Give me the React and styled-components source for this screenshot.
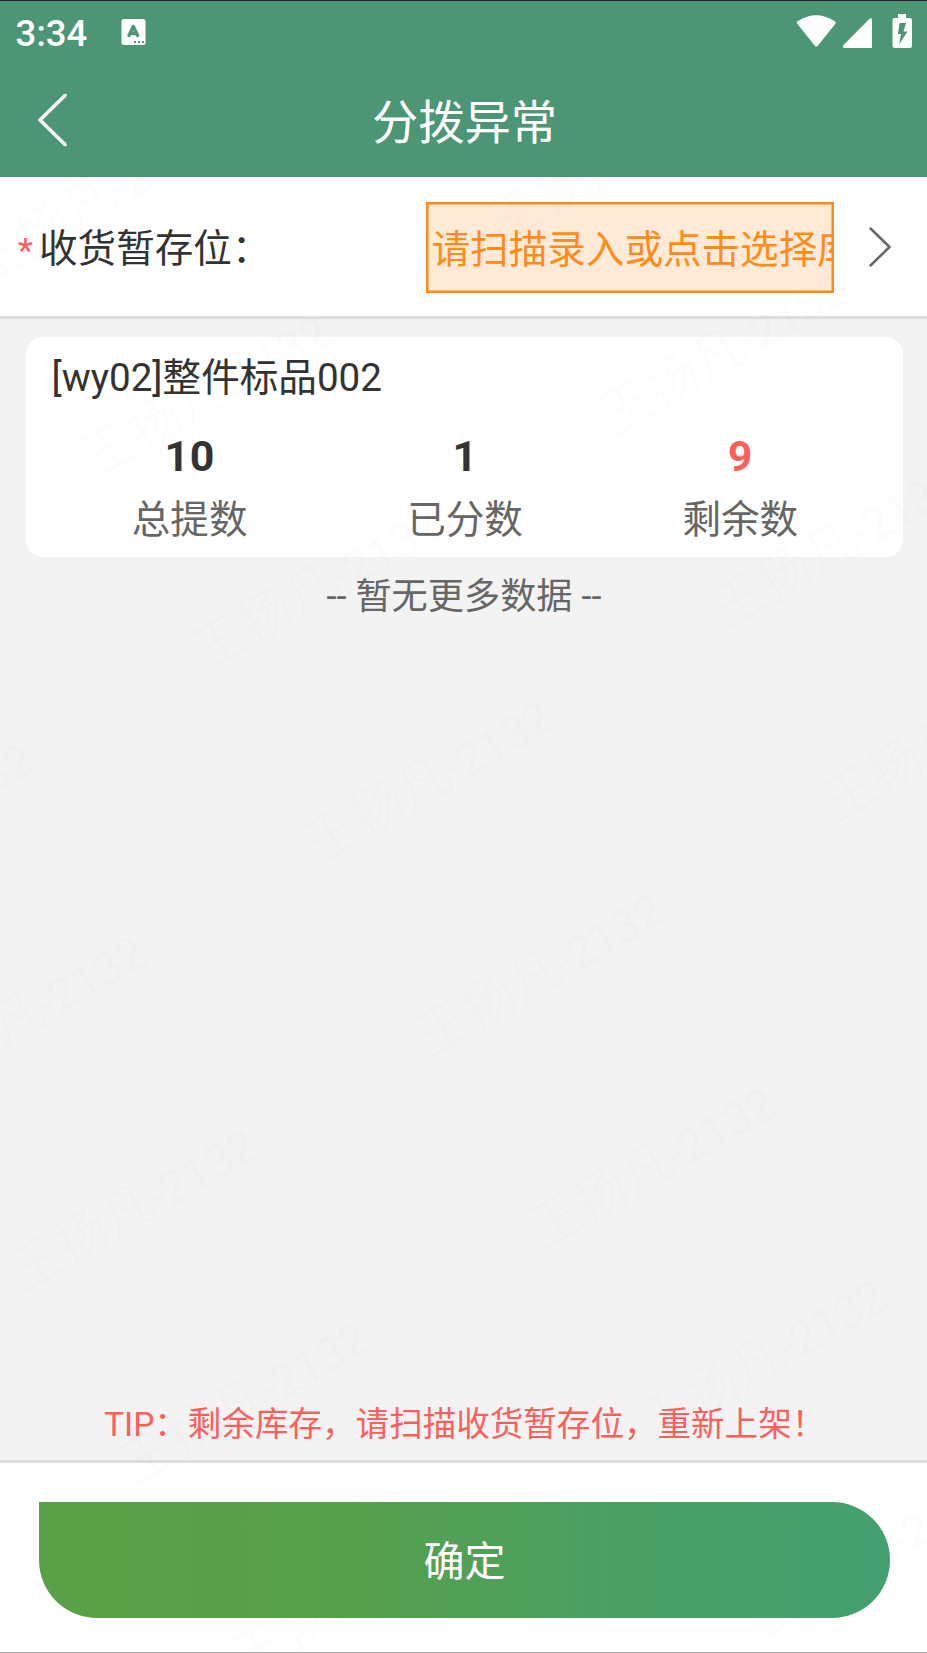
import React from 'react';
import styled, { createGlobalStyle } from 'styled-components';

const Global = createGlobalStyle`
  * { box-sizing: border-box; }
  body { margin: 0; font-family: Roboto, "Noto Sans CJK SC", sans-serif; color: #333; }
`;

const Screen = styled.div`
  position: relative;
  display: flex;
  flex-direction: column;
  width: 927px;
  height: 1653px;
  overflow: hidden;
  background: #f3f3f3;
  border-top: 1px solid #24262f;
  border-bottom: 1px solid #a5a5a5;
`;

const Header = styled.header`
  height: 175.5px;
  flex: none;
  background: #4d9675;
  color: #fff;
`;

const StatusBar = styled.div`
  display: flex;
  align-items: center;
  height: 62px;
  padding: 0 14px 0 15.5px;
`;

const Clock = styled.span`
  font-size: 36.5px;
  font-weight: 500;
  line-height: 64px;
  padding-top: 4px;
  width: 105px;
`;

const StatusIcons = styled.div`
  margin-left: auto;
  display: flex;
`;

const TitleBar = styled.div`
  display: grid;
  grid-template-columns: 100px 1fr 98px;
  align-items: center;
  height: 113.5px;
`;

const BackButton = styled.button`
  display: flex;
  padding: 0 0 3px 35px;
  border: 0;
  background: none;
`;

const Title = styled.h1`
  margin: 0;
  padding-top: 4px;
  text-align: center;
  font-size: 46.3px;
  font-weight: 400;
  line-height: 112px;
`;

const Field = styled.section`
  display: flex;
  align-items: center;
  flex: none;
  height: 142.5px;
  padding: 3px 35px 0 18px;
  background: #fff;
  border-bottom: 3px solid #dedede;
`;

const Required = styled.span`
  width: 21px;
  color: #ff5f5c;
  font-size: 33px;
  font-weight: 500;
  line-height: 40px;
  padding-top: 6px;
`;

const Label = styled.label`
  flex: 1;
  padding-top: 3px;
  font-size: 38.6px;
  line-height: 60px;
`;

const ScanInput = styled.div`
  width: 408px;
  height: 91px;
  padding-left: 3.5px;
  border: 2px solid #ff8c1a;
  box-shadow: inset 0 0 0 0.5px #ff8c1a;
  background: #ffead8;
  color: #ff8c1a;
  font-size: 38.6px;
  line-height: 92px;
  white-space: nowrap;
  overflow: hidden;
`;

const Arrow = styled.svg`
  margin: -1px 0 0 34px;
`;

const Card = styled.article`
  flex: none;
  height: 220px;
  margin: 18px 24px 0 26px;
  padding: 9px 0 0;
  border-radius: 17px;
  background: #fff;
`;

const ItemName = styled.h2`
  margin: 0;
  padding-left: 25.5px;
  font-size: 38.6px;
  font-weight: 400;
  line-height: 64px;
`;

const Stats = styled.div`
  display: grid;
  grid-template-columns: repeat(3, 1fr);
  padding: 0 25px 0 26px;
  text-align: center;
`;

const StatValue = styled.div`
  padding-top: 14px;
  font-size: 43px;
  font-weight: 700;
  letter-spacing: 0.5px;
  line-height: 64px;
  color: ${(p) => (p.$alert ? '#ff5f5c' : '#333')};
`;

const StatLabel = styled.div`
  padding-top: 3px;
  font-size: 38.6px;
  line-height: 58px;
  color: #666;
`;

const Empty = styled.p`
  margin: 9px 0 0 1px;
  text-align: center;
  font-size: 36.2px;
  line-height: 62px;
  color: #666;
`;

const Tip = styled.p`
  margin: auto 0 0;
  padding-left: 104px;
  font-size: 33.55px;
  line-height: 60px;
  height: 65px;
  color: #ff5f5c;
  white-space: nowrap;
`;

const Footer = styled.footer`
  flex: none;
  height: 192px;
  padding: 38.5px 37px 0 39px;
  border-top: 3px solid #dedede;
  background: #fff;
`;

const Confirm = styled.button`
  position: relative;
  z-index: 1;
  display: block;
  width: 100%;
  height: 116.5px;
  padding: 0 0 3px;
  border: 0;
  border-radius: 0 58px 58px 58px;
  background: linear-gradient(90deg, #5aa046 0%, #58a04a 33%, #4aa062 67%, #439f70 100%);
  color: #fff;
  font: inherit;
  font-size: 41px;
`;

const WatermarkLayer = styled.div`
  position: absolute;
  inset: 176px 0 0;
  overflow: hidden;
  pointer-events: none;
  opacity: 0.006;
  color: #000;
`;

const Watermark = styled.span`
  position: absolute;
  left: ${(p) => p.$x}px;
  top: ${(p) => p.$y}px;
  transform: rotate(-30deg);
  transform-origin: 0 0;
  font-size: 46px;
  line-height: 60px;
  white-space: nowrap;
`;

const WatermarkName = styled.span`
  font-size: 53px;
  font-weight: 300;
`;

// The marks repeat on a lattice that is turned by 30 degrees.
const marks = [];
for (let row = -5; row <= 6; row += 1) {
  for (let col = -3; col <= 3; col += 1) {
    const x = 293.6 + 407 * col + 111.5 * row;
    const y = 645.5 - 235 * col + 193 * row;
    if (x > -250 && x < 900 && y > 0 && y < 1564) marks.push({ x, y });
  }
}

const App = () => (
  <>
    <Global />
    <Screen>
      <Header>
        <StatusBar>
          <Clock>3:34</Clock>
          <svg width="25" height="28" viewBox="0 0 25 28">
            <rect x="0.5" y="1" width="24" height="26" rx="2.5" fill="#fff" />
            <path d="M8 17.500 12.300 8.500 16.600 17.500M9.700 15.500H15" fill="none" stroke="#4d9675" strokeWidth="3.400" strokeLinecap="round" strokeLinejoin="round" />
            <path d="M13 23h2v2h-2zM17 23h2v2h-2zM21 23h2v2h-2z" fill="#4d9675" />
          </svg>
          <StatusIcons>
            <svg width="117" height="36" viewBox="0 0 117 36" fill="#fff">
              <path d="M1.500 10Q-.2 8.300 2 7Q20 -4.500 38.500 7Q40.500 8.300 39 10.200L22 31.500Q20.300 33.500 18.600 31.500Z" />
              <path d="M47.500 34Q46 32.500 47.500 31L73.500 4.800Q76 3.300 76 5.500V33Q76 34 75 34Z" />
              <path fillRule="evenodd" d="M102 0H110V4H114Q116 4 116 6V32Q116 34 114 34H98.500Q96.500 34 96.500 32V6Q96.500 4 98.500 4H102ZM103.500 9 102 20H105L103 30.500 111.500 17.500H107.500L110 9Z" />
            </svg>
          </StatusIcons>
        </StatusBar>
        <TitleBar>
          <BackButton aria-label="返回">
            <svg width="34" height="54" viewBox="0 0 34 54">
              <path d="M30 2.500 5 27 30 51.500" fill="none" stroke="#fff" strokeWidth="3.500" strokeLinecap="round" strokeLinejoin="round" />
            </svg>
          </BackButton>
          <Title>分拨异常</Title>
        </TitleBar>
      </Header>
      <Field>
        <Required>*</Required>
        <Label>收货暂存位：</Label>
        <ScanInput>请扫描录入或点击选择库位</ScanInput>
        <Arrow width="24" height="42" viewBox="0 0 24 42">
          <path d="M2.500 2.500 21.500 21 2.500 39.500" fill="none" stroke="#666" strokeWidth="2.500" strokeLinecap="round" strokeLinejoin="round" />
        </Arrow>
      </Field>
      <Card>
        <ItemName>[wy02]整件标品002</ItemName>
        <Stats>
          <div>
            <StatValue>10</StatValue>
            <StatLabel>总提数</StatLabel>
          </div>
          <div>
            <StatValue>1</StatValue>
            <StatLabel>已分数</StatLabel>
          </div>
          <div>
            <StatValue $alert>9</StatValue>
            <StatLabel>剩余数</StatLabel>
          </div>
        </Stats>
      </Card>
      <Empty>-- 暂无更多数据 --</Empty>
      <Tip>TIP：剩余库存，请扫描收货暂存位，重新上架！</Tip>
      <Footer>
        <Confirm>确定</Confirm>
      </Footer>
      <WatermarkLayer aria-hidden="true">
        {marks.map(({ x, y }) => (
          <Watermark key={`${x},${y}`} $x={x} $y={y}>
            <WatermarkName>王扬凡</WatermarkName>-2132
          </Watermark>
        ))}
      </WatermarkLayer>
    </Screen>
  </>
);

export default App;
